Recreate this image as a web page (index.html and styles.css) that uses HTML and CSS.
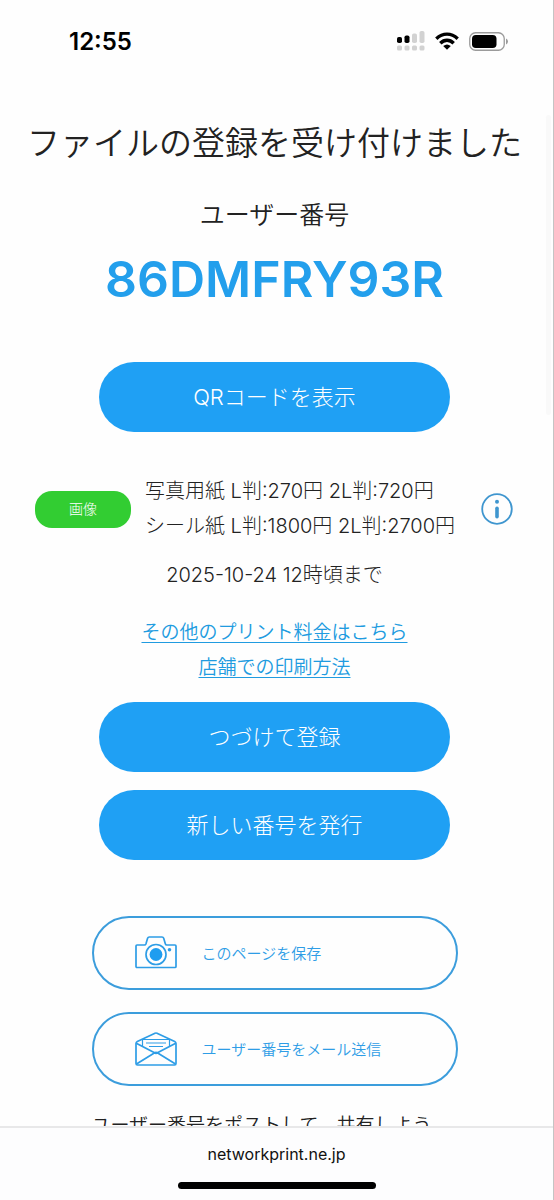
FILE: index.html
```html
<!DOCTYPE html>
<html lang="ja">
<head>
<meta charset="utf-8">
<meta name="viewport" content="width=device-width, initial-scale=1">
<title>ファイルの登録を受け付けました</title>
<link rel="stylesheet" href="styles.css">
</head>
<body>
<div class="screen">
  <header class="status">
    <time class="clock">12:55</time>
    <div class="indicators">
      <svg width="28" height="20" viewBox="0 0 28 20" aria-hidden="true">
        <g fill="#000"><rect x="0" y="6" width="5" height="6" rx="1.8"/><rect x="7.5" y="4.500" width="5" height="7.500" rx="1.800"/></g>
        <g fill="#d2d2d2"><rect x="15" y="2.500" width="5" height="9.500" rx="1.800"/><rect x="22.500" y="0" width="5" height="12" rx="1.800"/><rect x="0" y="14.500" width="5" height="5" rx="1.500"/><rect x="7.500" y="14.500" width="5" height="5" rx="1.500"/><rect x="15" y="14.500" width="5" height="5" rx="1.500"/><rect x="22.500" y="14.500" width="5" height="5" rx="1.500"/></g>
      </svg>
      <svg width="24" height="18" viewBox="0 0 24 18" aria-hidden="true">
        <g fill="none" stroke="#000" stroke-width="3.400"><path d="M1.300 6.700Q6.200 2.100 12 2.100T22.700 6.700"/><path d="M5.300 11.200Q8.300 8.200 12 8.200T18.700 11.200"/></g>
        <path d="M8.200 14Q12 10.900 15.800 14L12 17.800Z"/>
      </svg>
      <svg width="39" height="19" viewBox="0 0 39 19" aria-hidden="true">
        <rect x="0.750" y="0.750" width="34.500" height="17.500" rx="5.800" fill="none" stroke="#9b9b9b" stroke-width="1.300"/>
        <rect x="3" y="3" width="24.500" height="13" rx="3.800"/>
        <path d="M37 6.500Q39 7.500 39 9.500T37 12.500Z" fill="#9b9b9b"/>
      </svg>
    </div>
  </header>

  <main class="content">
    <h1 class="title">ファイルの登録を受け付けました</h1>
    <p class="label">ユーザー番号</p>
    <p class="code">86DMFRY93R</p>
    <button class="primary show-qr" type="button">QRコードを表示</button>

    <section class="prices">
      <span class="tag">画像</span>
      <p class="price-list">写真用紙 L判:270円 2L判:720円<br>シール紙 L判:1800円 2L判:2700円</p>
      <button class="info" type="button" aria-label="料金について">
        <svg width="32" height="32" viewBox="0 0 32 32" aria-hidden="true"><circle cx="16" cy="16" r="14.800" fill="none" stroke="#3f96cf" stroke-width="1.800"/><circle cx="16" cy="8.700" r="2" fill="#3f96cf"/><path d="M16 15.200V23.700" stroke="#3f96cf" stroke-width="3.600" stroke-linecap="round"/></svg>
      </button>
    </section>
    <p class="deadline">2025-10-24 12時頃まで</p>

    <nav class="links">
      <a href="#price">その他のプリント料金はこちら</a>
      <a href="#howto">店舗での印刷方法</a>
    </nav>

    <div class="actions">
      <button class="primary" type="button">つづけて登録</button>
      <button class="primary" type="button">新しい番号を発行</button>
    </div>

    <div class="shares">
      <button class="outline" type="button">
        <svg width="42" height="34" viewBox="0 0 42 34" fill="none" stroke="#2e9de6" stroke-width="1.700" stroke-linejoin="round" aria-hidden="true"><path d="M1 10Q1 9 2 9H9.500Q10.500 9 10.900 8L12.600 2.300Q13 1 14.300 1H27Q28.300 1 28.700 2.300L30.400 8Q30.700 9 31.800 9H40Q41 9 41 10V30.500Q41 31.500 40 31.500H2Q1 31.500 1 30.500Z"/><circle cx="21" cy="18.500" r="10"/><circle cx="21" cy="18.500" r="6.400" fill="#1e9df0" stroke="none"/><circle cx="34.500" cy="13.700" r="1.800" fill="#2e9de6" stroke="none"/></svg>
        <span>このページを保存</span>
      </button>
      <button class="outline" type="button">
        <svg width="42" height="34" viewBox="0 0 42 34" fill="none" stroke="#2e9de6" stroke-width="1.700" stroke-linejoin="round" aria-hidden="true"><path d="M1 11.500Q1 10 2.300 9.400L20 1.200Q21 .8 22 1.200L39.700 9.400Q41 10 41 11.500V31.500Q41 33 39.500 33H2.500Q1 33 1 31.500Z"/><path d="M1.300 11.200L21 21.500L40.700 11.200M1.500 32L19.300 21Q21 19.800 22.700 21L40.500 32"/><g stroke-width="1.200"><path d="M7.500 14V7.500H34.500V14"/><path d="M11 11H31M14 14.500H28" stroke-width="1"/></g></svg>
        <span>ユーザー番号をメール送信</span>
      </button>
      <p class="post">ユーザー番号をポストして、共有しよう</p>
    </div>
  </main>
  <span class="scrollbar"></span>

  <footer class="browser-bar">
    <span class="address">networkprint.ne.jp</span>
    <span class="home"></span>
  </footer>
</div>
</body>
</html>
```
FILE: styles.css
```css
* {
  box-sizing: border-box;
}

body {
  margin: 0;
  background: #fefefe;
  color: #222;
  font-family: Inter, "Noto Sans CJK JP", sans-serif;
  font-weight: 350;
}

h1,
p {
  margin: 0;
  font-weight: 350;
}

button {
  padding: 0;
  border: 0;
  background: none;
  font: inherit;
  cursor: pointer;
}

svg {
  display: block;
  flex: none;
}

.screen {
  position: relative;
  display: flex;
  flex-direction: column;
  height: 100vh;
  overflow: hidden;
  border-right: 1px solid #c4c4c4;
}

.status {
  display: flex;
  flex: none;
  align-items: center;
  justify-content: space-between;
  height: 82px;
  padding: 0 45px 0 69px;
}

.clock {
  color: #000;
  font-size: 24px;
  font-weight: 600;
}

.indicators {
  display: flex;
  align-items: center;
  gap: 10px;
}

.content {
  display: flex;
  flex: 1;
  flex-direction: column;
  align-items: center;
  min-height: 0;
  padding: 37px 4px 0 0;
  overflow: hidden;
  font-size: 20px;
  line-height: 35px;
  text-align: center;
}

.content > * {
  flex: none;
}

.title {
  font-size: 33px;
  line-height: 48px;
  white-space: nowrap;
}

.label {
  margin-top: 31px;
  font-size: 25px;
}

.code {
  margin-top: 16px;
  color: #239fec;
  font-size: 50px;
  font-weight: 600;
  line-height: 60px;
}

.primary {
  width: 100%;
  height: 70px;
  border-radius: 35px;
  background: #1fa0f4;
  color: #fff;
  font-size: 22px;
  font-weight: 300;
}

.show-qr {
  width: 64%;
  margin-top: 53px;
}

.prices {
  display: flex;
  align-items: center;
  width: 100%;
  margin-top: 42px;
  padding: 0 36px 0 35px;
}

.tag {
  width: 96px;
  height: 37px;
  border-radius: 17px;
  background: #32cd32;
  color: #fff;
  font-size: 14px;
  font-weight: 300;
}

.price-list {
  flex: 1;
  padding-left: 14px;
  font-weight: 300;
  text-align: left;
  white-space: nowrap;
}

.deadline {
  margin-top: 14px;
  font-weight: 300;
}

.links {
  display: flex;
  flex-direction: column;
  align-items: center;
  margin-top: 22px;
  font-size: 19px;
}

.links a {
  color: #209be0;
  text-underline-offset: 3px;
  text-decoration-thickness: 1px;
}

.actions {
  display: grid;
  gap: 18px;
  width: 64%;
  margin-top: 17px;
}

.shares {
  display: grid;
  gap: 22px;
  width: 366px;
  max-width: 100%;
  margin-top: 56px;
}

.outline {
  display: flex;
  align-items: center;
  gap: 25px;
  height: 74px;
  padding-left: 41px;
  border: 2px solid #3c9ddc;
  border-radius: 37px;
  color: #2e9de6;
  font-size: 15px;
}

.post {
  font-size: 19px;
  text-align: left;
}

.scrollbar {
  position: absolute;
  top: 115px;
  right: 2px;
  width: 5px;
  height: 300px;
  border-radius: 3px;
  background: #f9f9f9;
}

.browser-bar {
  display: flex;
  flex: none;
  flex-direction: column;
  align-items: center;
  height: 74px;
  padding-top: 16px;
  border-top: 2px solid #e8e8e9;
  background: #fdfdfe;
}

.address {
  color: #111;
  font-size: 16px;
  font-weight: 400;
  line-height: 20px;
}

.home {
  width: 198px;
  height: 7px;
  margin-top: 18px;
  border-radius: 4px;
  background: #000;
}
```
